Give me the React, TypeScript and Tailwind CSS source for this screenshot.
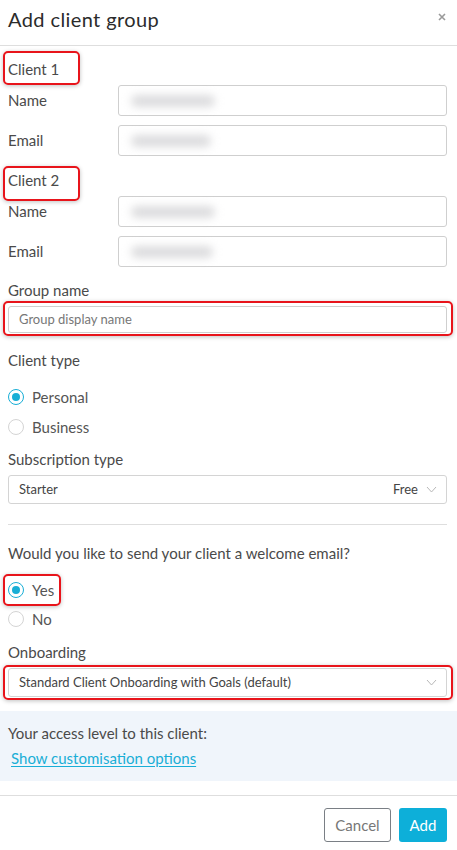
import React from "react"

function Blur({ w }: { w: number }) {
  return (
    <div className="ml-[12px] h-[12px] rounded-full bg-[#dcdcde] blur-[4px]" style={{ width: w }} />
  )
}

function Field({ label, blur }: { label: string; blur: number }) {
  return (
    <div className="flex items-center">
      <div className="w-[110px] text-[15px] text-[#4a4a4a]">{label}</div>
      <div className="flex h-[31px] flex-1 items-center rounded-[3px] border border-[#cfcfcf] bg-white">
        <Blur w={blur} />
      </div>
    </div>
  )
}

function Radio({ checked, label }: { checked?: boolean; label: string }) {
  return (
    <div className="flex h-5 items-center">
      {checked ? (
        <span className="flex h-[16px] w-[16px] items-center justify-center rounded-full border-[1.5px] border-[#18aed6] bg-white">
          <span className="h-[8px] w-[8px] rounded-full bg-[#18aed6]" />
        </span>
      ) : (
        <span className="h-[16px] w-[16px] rounded-full border border-[#d4d4d4] bg-white" />
      )}
      <span className="ml-[8px] text-[15px] text-[#555]">{label}</span>
    </div>
  )
}

function Chevron() {
  return (
    <svg width="11" height="7" viewBox="0 0 11 7" className="ml-[8px]">
      <polyline points="1,1 5.5,6 10,1" fill="none" stroke="#b8b8b8" strokeWidth="1" />
    </svg>
  )
}

function Mark({ className }: { className: string }) {
  return (
    <div
      className={
        "pointer-events-none absolute rounded-[5px] border-2 border-[#e8141b] shadow-[0_1px_4px_rgba(0,0,0,0.25)] " +
        className
      }
    />
  )
}

export default function App() {
  return (
    <div className="min-h-[850px] w-[457px] bg-white font-['Lato',sans-serif] text-[#333]">
      <header className="flex h-[46px] items-center justify-between border-b border-[#dedede] pl-2 pr-[11px]">
        <h1 className="-mt-[7px] text-[20px] tracking-[0.4px] text-[#2b2b2b]">Add client group</h1>
        <svg width="8" height="8" viewBox="0 0 8 8" className="-mt-[12px]">
          <path d="M1 1L7 7M7 1L1 7" stroke="#9a9a9a" strokeWidth="1.6" />
        </svg>
      </header>

      <div className="pl-2 pr-[10px]">
        <div className="relative pb-[6px] pt-[13px]">
          <div className="text-[15px] leading-5 text-[#4a4a4a]">Client 1</div>
          <Mark className="-left-[5px] top-[5px] h-[34px] w-[77px]" />
        </div>
        <Field label="Name" blur={84} />
        <div className="mt-[9px]">
          <Field label="Email" blur={80} />
        </div>

        <div className="relative pb-[6px] pt-[14px]">
          <div className="text-[15px] leading-5 text-[#4a4a4a]">Client 2</div>
          <Mark className="-left-[5px] top-[10px] h-[35px] w-[77px]" />
        </div>
        <Field label="Name" blur={84} />
        <div className="mt-[9px]">
          <Field label="Email" blur={82} />
        </div>

        <div className="mt-[13px] text-[15px] leading-5 text-[#4a4a4a]">Group name</div>
        <div className="relative mt-[6px]">
          <div className="flex h-[27px] items-center rounded-[3px] border border-[#cfcfcf] pl-[10px] text-[13px] text-[#777]">
            Group display name
          </div>
          <Mark className="-left-[5px] -right-[6px] -top-[5px] -bottom-[3px]" />
        </div>

        <div className="mt-[17px] text-[15px] leading-5 text-[#4a4a4a]">Client type</div>
        <div className="mt-[17px]">
          <Radio checked label="Personal" />
        </div>
        <div className="mt-[10px]">
          <Radio label="Business" />
        </div>

        <div className="mt-[12px] text-[15px] leading-5 text-[#4a4a4a]">Subscription type</div>
        <div className="mt-[6px] flex h-[29px] items-center justify-between rounded-[3px] border border-[#d4d4d4] pl-[10px] pr-[9px] text-[13px] text-[#444]">
          <span>Starter</span>
          <span className="flex items-center">
            Free
            <Chevron />
          </span>
        </div>

        <div className="mt-[20px] border-t border-[#dedede]" />

        <div className="mt-[18px] text-[15px] leading-5 text-[#4a4a4a]">
          Would you like to send your client a welcome email?
        </div>
        <div className="relative mt-[17px]">
          <Radio checked label="Yes" />
          <Mark className="-left-[5px] -top-[6px] h-[32px] w-[58px]" />
        </div>
        <div className="mt-[9px]">
          <Radio label="No" />
        </div>

        <div className="mt-[13px] text-[15px] leading-5 text-[#4a4a4a]">Onboarding</div>
        <div className="relative mt-[6px]">
          <div className="flex h-[29px] items-center justify-between rounded-[3px] border border-[#d4d4d4] pl-[10px] pr-[9px] text-[13px] text-[#444]">
            <span>Standard Client Onboarding with Goals (default)</span>
            <Chevron />
          </div>
          <Mark className="-left-[5px] -right-[6px] -top-[3px] -bottom-[3px]" />
        </div>
      </div>

      <div className="mt-[14px] bg-[#f0f5fb] px-2 pb-[13px] pt-[12px]">
        <div className="text-[15px] leading-5 text-[#4a4a4a]">Your access level to this client:</div>
        <a className="ml-[3px] mt-[5px] block text-[15px] leading-5 text-[#19aed6] underline underline-offset-2">
          Show customisation options
        </a>
      </div>

      <div className="mt-[14px] flex justify-end gap-[8px] border-t border-[#dedede] pr-[10px] pt-[12px]">
        <button className="h-[34px] w-[67px] rounded-[3px] border border-[#7a7f85] text-[15px] text-[#777]">
          Cancel
        </button>
        <button className="h-[34px] w-[48px] rounded-[3px] bg-[#0dafd9] text-[15px] text-white">Add</button>
      </div>
    </div>
  )
}
